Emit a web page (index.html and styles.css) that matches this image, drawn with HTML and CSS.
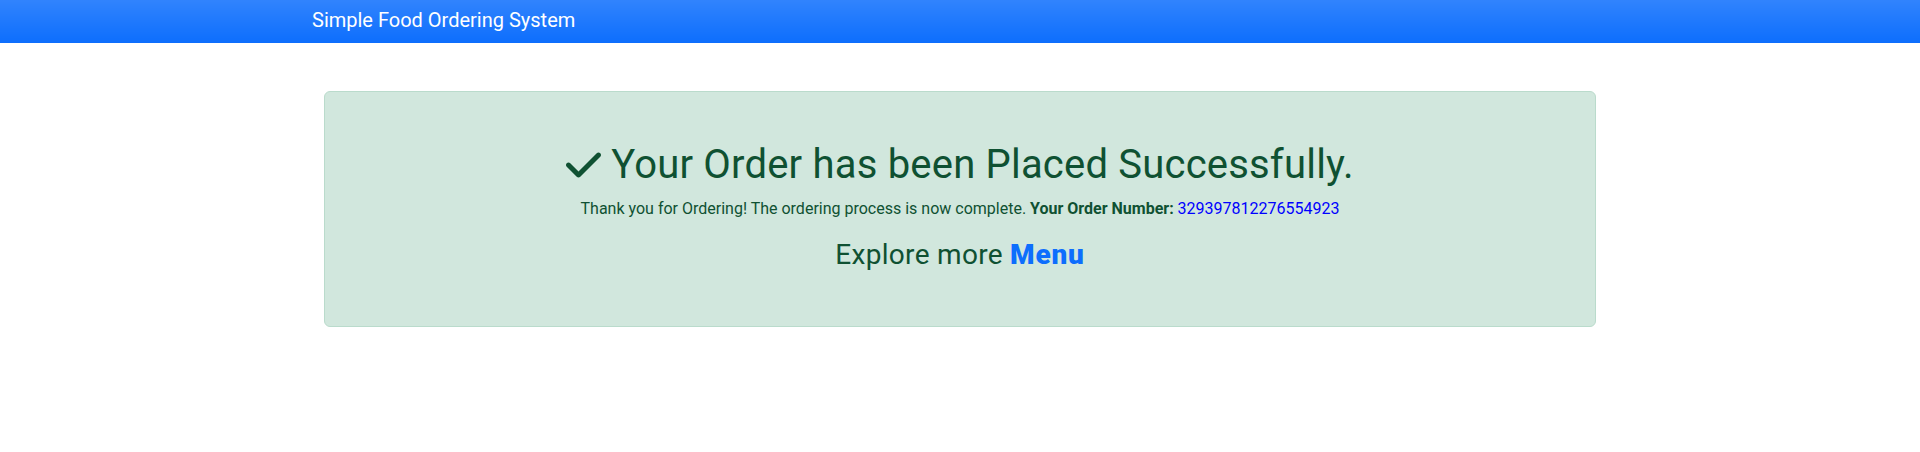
FILE: index.html
```html
<!DOCTYPE html>
<html lang="en">
<head>
    <meta charset="UTF-8">
    <meta name="viewport" content="width=device-width, initial-scale=1.0">
    <title>Simple Food Ordering System - Order Placed</title>
    <link rel="stylesheet" href="styles.css">
</head>
<body>
    <nav class="navbar">
        <div class="container">
            <a class="navbar-brand" href="#">Simple Food Ordering System</a>
        </div>
    </nav>

    <div class="container main">
        <div class="col">
            <div class="alert-success">
                <h1 class="title">
                    <svg class="check" viewBox="0 0 448 512" aria-hidden="true"><path d="M438.6 105.4c12.5 12.5 12.5 32.8 0 45.3l-256 256c-12.5 12.5-32.8 12.5-45.3 0l-128-128c-12.5-12.5-12.5-32.8 0-45.3s32.8-12.5 45.3 0L160 338.7 393.4 105.4c12.5-12.5 32.8-12.5 45.3 0z"/></svg>
                    Your Order has been Placed Successfully.
                </h1>
                <p class="lead-text">Thank you for Ordering! The ordering process is now complete. <b>Your Order Number:</b> <span class="order-no">329397812276554923</span></p>
                <h3 class="explore">Explore more <a href="#" class="menu-link">Menu</a></h3>
            </div>
        </div>
    </div>
</body>
</html>
```
FILE: styles.css
```css
body { margin: 0; font-family: Roboto, "Liberation Sans", sans-serif; font-size: 16px; line-height: 1.5; color: #212529; background: #fff; }
.container { max-width: 1320px; margin: 0 auto; padding: 0 12px; box-sizing: border-box; }
.navbar { background-color: #0d6efd; background-image: linear-gradient(180deg, rgba(255,255,255,0.15), rgba(255,255,255,0)); padding: 5px 0 8px; }
.navbar-brand { display: inline-block; color: #fff; font-size: 20px; line-height: 30px; text-decoration: none; }
.main { margin-top: 48px; }
.col { padding: 0 12px; }
.alert-success { background-color: #d1e7dd; border: 1px solid #badbcc; border-radius: 6px; color: #0f5132; padding: 49px 48px 46px; text-align: center; }
.title { font-size: 40px; font-weight: 400; line-height: 1.2; margin: 0 0 8px; letter-spacing: 0.2px; }
.check { width: 0.875em; height: 1em; vertical-align: -0.18em; fill: currentColor; }
.lead-text { margin: 0 0 17px; }
.lead-text b { font-weight: 700; }
.order-no { color: blue; }
.explore { font-size: 28px; font-weight: 400; line-height: 1.2; margin: 0 0 8px; letter-spacing: 0.3px; }
.menu-link { color: #0d6efd; font-weight: 900; text-decoration: none; letter-spacing: 0.8px; }
```
